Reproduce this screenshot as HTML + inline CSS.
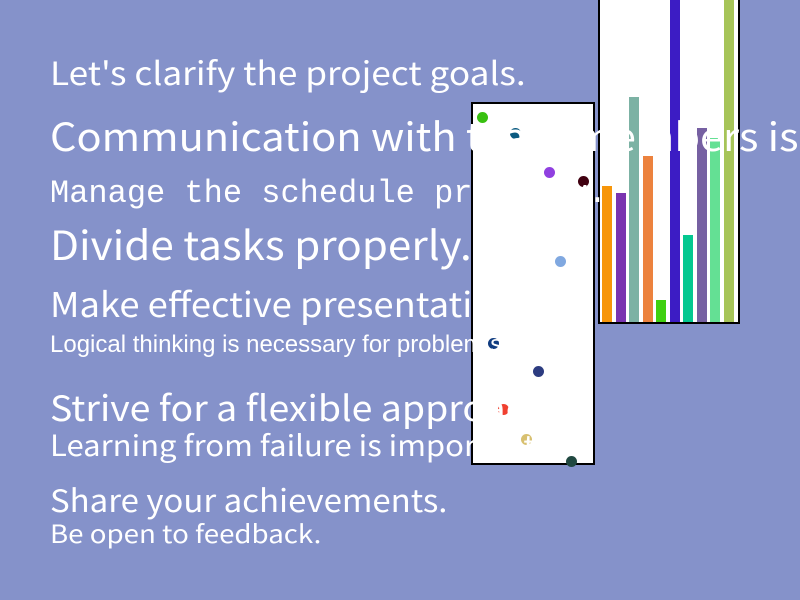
<!DOCTYPE html>
<html><head><meta charset="utf-8"><style>
body{margin:0;width:800px;height:600px;background:#8592ca;position:relative;overflow:hidden}
.t{position:absolute;left:50px;color:#fff;white-space:nowrap;z-index:3;line-height:1;transform-origin:0 0}
.g{font-family:"Noto Sans CJK JP","DejaVu Sans",sans-serif}
.a{font-family:"Liberation Sans",sans-serif}
.m{font-family:"Liberation Mono",monospace}
#sc{position:absolute;left:471px;top:102px;width:120px;height:359px;background:#fff;border:2px solid #000;z-index:2}
#bc{position:absolute;left:598px;top:-4px;width:138px;height:326px;background:#fff;border:2px solid #000;border-top:none;z-index:1}
.b{position:absolute;bottom:0;width:10px}
.d{position:absolute;width:11px;height:11px;border-radius:50%;z-index:2}
</style></head><body>
<div id="bc">
<div class="b" style="left:2px;top:190px;background:#f7960a"></div>
<div class="b" style="left:16px;top:197px;background:#7a34b0"></div>
<div class="b" style="left:29px;top:101px;background:#7cb2a4"></div>
<div class="b" style="left:43px;top:160px;background:#ec823e"></div>
<div class="b" style="left:56px;top:304px;background:#40d010"></div>
<div class="b" style="left:70px;top:0;background:#3c1cc4"></div>
<div class="b" style="left:83px;top:239px;background:#04c890"></div>
<div class="b" style="left:97px;top:132px;background:#7660a2"></div>
<div class="b" style="left:110px;top:142px;background:#64e094"></div>
<div class="b" style="left:124px;top:0;background:#a6c458"></div>
</div>
<div id="sc"></div>
<div class="d" style="left:477px;top:112px;background:#38c010"></div>
<div class="d" style="left:510px;top:128px;background:#0a5a80"></div>
<div class="d" style="left:544px;top:167px;background:#9040e0"></div>
<div class="d" style="left:578px;top:176px;background:#400010"></div>
<div class="d" style="left:555px;top:256px;background:#80a8e0"></div>
<div class="d" style="left:488px;top:338px;background:#103c80"></div>
<div class="d" style="left:533px;top:366px;background:#2c3c80"></div>
<div class="d" style="left:498px;top:404px;background:#f04030"></div>
<div class="d" style="left:521px;top:434px;background:#d8c070"></div>
<div class="d" style="left:566px;top:456px;background:#204840"></div>

<div class="t g" style="top:56px;font-size:32px;transform:scaleX(1.1)">Let's clarify the project goals.</div>
<div class="t g" style="top:116px;font-size:39px;transform:scaleX(1.065)">Communication with team members is important.</div>
<div class="t m" style="top:178px;font-size:32px">Manage the schedule properly.</div>
<div class="t g" style="top:223px;font-size:40px;transform:scaleX(1.055)">Divide tasks properly.</div>
<div class="t g" style="top:286px;font-size:34px;transform:scaleX(1.07)">Make effective presentations.</div>
<div class="t a" style="top:333px;font-size:24px">Logical thinking is necessary for problem solving.</div>
<div class="t g" style="top:389px;font-size:35px;transform:scaleX(1.07)">Strive for a flexible approach.</div>
<div class="t g" style="top:430px;font-size:29px;transform:scaleX(1.07)">Learning from failure is important.</div>
<div class="t g" style="top:483px;font-size:31px;transform:scaleX(1.064)">Share your achievements.</div>
<div class="t g" style="top:521px;font-size:25px;transform:scaleX(1.107)">Be open to feedback.</div>
</body></html>
